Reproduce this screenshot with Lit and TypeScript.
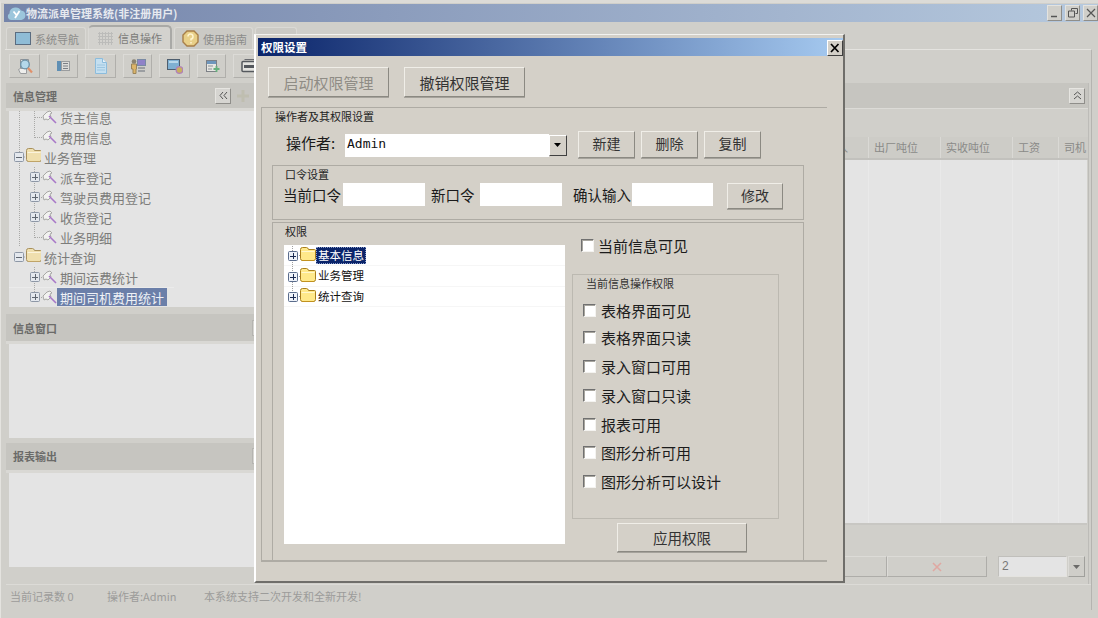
import { LitElement, html, css, svg } from "lit";
import { customElement } from "lit/decorators.js";

const plusBox = (x: number, y: number, minus: boolean, dim: boolean) => svg`
  <rect x=${x + 0.5} y=${y + 0.5} width="9" height="9" rx="1" fill=${dim ? "#e4e8ee" : "#eef2f8"} stroke=${dim ? "#8d97a6" : "#5a6c8c"}/>
  <path d="M${x + 2} ${y + 5}h6${minus ? "" : `M${x + 5} ${y + 2}v6`}" stroke=${dim ? "#5f6670" : "#1a2a50"} stroke-width="1" shape-rendering="crispEdges"/>`;

const folder = (x: number, y: number, dim: boolean) => svg`
  <path d="M${x + 0.5} ${y + 11.5}V${y + 2.5}q0-2 2-2h4q1.5 0 2 2h6q1 0 1 1v8q0 2-2 2H${x + 2.5}q-2 0-2-2z" fill=${dim ? "#efdfae" : "#ffe98a"} stroke=${dim ? "#a8905c" : "#a97f1c"}/>
  <path d="M${x + 1.5} ${y + 4.5}h13" stroke=${dim ? "#faf3dc" : "#fff8cf"}/>
  <path d="M${x + 2} ${y + 13.5}h12" stroke=${dim ? "#bfa468" : "#c2921f"}/>`;

const tool = (x: number, y: number) => svg`
  <path d="M${x + 1} ${y + 6}l4-4 3-1 2 2-2 1 1 3-3 3-2-1-2 1z" fill="#f2f2f0" stroke="#a8a8a6"/>
  <path d="M${x + 7} ${y + 6}l7 7" stroke="#a878c8" stroke-width="1.6"/>`;

type Kind = "folder" | "branch" | "leaf";
interface TreeRow { text: string; kind: Kind; last?: boolean; sel?: boolean; }

const LEFT_TREE: TreeRow[] = [
  { text: "货主信息", kind: "leaf" },
  { text: "费用信息", kind: "leaf", last: true },
  { text: "业务管理", kind: "folder" },
  { text: "派车登记", kind: "branch" },
  { text: "驾驶员费用登记", kind: "branch" },
  { text: "收货登记", kind: "branch" },
  { text: "业务明细", kind: "leaf", last: true },
  { text: "统计查询", kind: "folder" },
  { text: "期间运费统计", kind: "branch" },
  { text: "期间司机费用统计", kind: "branch", sel: true, last: true },
];

const dots = "#a9a9a7";
function leftGlyph(r: TreeRow, i: number) {
  const w = r.kind === "folder" ? 32 : 48;
  const rootLine = i < 7;
  const top = i === 0 ? 4 : 0;
  return html`<svg class="glyph" width=${w} height="20" viewBox="8 0 ${w} 20">
    ${rootLine ? svg`<path d="M18.5 ${top}V20" stroke=${dots} stroke-dasharray="1 1"/>` : ""}
    ${r.kind === "folder"
      ? svg`<path d="M23 10h2" stroke=${dots} stroke-dasharray="1 1"/>${plusBox(13, 5, true, true)}${folder(25, 1, true)}`
      : svg`<path d="M33.5 ${top}V${r.last ? 11 : 20}M34 10.5h7" stroke=${dots} stroke-dasharray="1 1"/>
            ${r.kind === "branch" ? plusBox(29, 5, false, true) : ""}${tool(41, 3)}`}
  </svg>`;
}

const dialogGlyph = (i: number) => html`<svg class="glyph" width="32" height="20" viewBox="284 0 32 20">
  <path d="M292.5 ${i === 0 ? -3 : 0}V${i === 2 ? 10 : 20}M293 10.5h7" stroke="#a0a0a0" stroke-dasharray="1 1"/>
  ${plusBox(288, 6, false, false)}${folder(300, 2, false)}
</svg>`;

const TOOL_ICONS = [
  svg`<path d="M3.500 1.500h8v9h-8z" fill="#e6e6e4" stroke="#8f9296"/><path d="M1.500 11.500l2-1h6v5h-6z" fill="#eeeeec" stroke="#9a9c9e"/><circle cx="8" cy="6.500" r="4.300" fill="#b4d8ea" stroke="#6d93a8" stroke-width="1.300"/><path d="M11 10l4 4.500" stroke="#e0906a" stroke-width="2.200"/>`,
  svg`<rect x="2" y="3" width="4" height="10" fill="#5f8fb4"/><rect x="6.500" y="3.500" width="8" height="9" fill="#dcdcda" stroke="#9a9c9e"/><path d="M8 5.500h5M8 8h5M8 10.500h5" stroke="#7a7e84"/>`,
  svg`<path d="M2.500 .5h7l4 4v11h-11z" fill="#c4dff0" stroke="#8cbcdc"/><path d="M9.500 .5v4h4" fill="#e8f2f8" stroke="#8cbcdc"/><path d="M4 7h8M4 9.500h8M4 12h8" stroke="#9cc6e0"/>`,
  svg`<circle cx="4" cy="3.500" r="2.300" fill="#8a8270"/><path d="M1.500 6h5v5H6v4.500H3V11h-1.500z" fill="#dcb468" stroke="#9a8458"/><rect x="7.500" y="1.500" width="8" height="6" fill="#8f82c8" stroke="#7a8aa4"/><path d="M8 10h7M8 13h7" stroke="#8a8e94" stroke-width="1.500"/>`,
  svg`<rect x=".5" y="1.500" width="12" height="10" fill="#7fb0d2" stroke="#4e5e6e"/><path d="M2 3h9v2H2z" fill="#b8d8ea"/><circle cx="12.500" cy="12" r="3.300" fill="#c8b060" stroke="#b080b8" stroke-width="1.300"/>`,
  svg`<rect x="2.500" y="2.500" width="10" height="11" fill="#e6e6e2" stroke="#7c8086"/><rect x="3" y="3" width="9" height="3" fill="#6e96bc"/><path d="M4 8h5M4 11h4" stroke="#8a8f95"/><path d="M12.500 8v6M9.500 11h6" stroke="#66b07c" stroke-width="1.800"/>`,
  svg`<path d="M3.500 1.500h10v3" fill="none" stroke="#6a6c70"/><rect x="1" y="3.500" width="14" height="10" rx="1" fill="#e4e4e0" stroke="#55595e" stroke-width="1.500"/><rect x="3" y="7" width="10" height="3" fill="#55595e"/>`,
];
const TOOL_WIDTHS = [31, 31, 31, 29, 31, 29, 31];

const CHECKS: [string, number][] = [
  ["表格界面可见", 12], ["表格界面只读", 11], ["录入窗口可用", 13], ["录入窗口只读", 13],
  ["报表可用", 13], ["图形分析可用", 12], ["图形分析可以设计", 13],
];

const COLS: [string, number][] = [["运费收入", 72], ["出厂吨位", 72], ["实收吨位", 72], ["工资", 46], ["司机", 30]];

@customElement("app-root")
export class AppRoot extends LitElement {
  static styles = css`
    :host { display: block; position: relative; width: 1098px; height: 618px; overflow: hidden;
      background: #d0cfca; font-family: "Noto Sans CJK SC", "Liberation Sans", sans-serif; color: #222;
      box-sizing: border-box; border-top: 3px solid #dcdbd7; border-left: 1px solid #e4e3df; }
    * { box-sizing: border-box; }
    svg { display: block; flex: none; }

    .title { height: 18px; margin: 1px 0 0 3px; display: flex; align-items: center; padding-left: 3px;
      background: linear-gradient(90deg, #7484aa, #b6c9de); color: #e6e9ef; font-size: 11px; font-weight: 700; line-height: 18px; }
    .title .logo { margin-right: 0; }
    .title .name { flex: 1; white-space: nowrap; }
    .wbtns { display: flex; gap: 3px; }
    .wbtn { width: 15px; height: 16px; background: #d0cfca; border: 1px solid; border-color: #e4e3df #8f8e8a #8f8e8a #e4e3df; display: flex; align-items: center; justify-content: center; }

    .tabs { height: 27px; margin-left: 5px; display: flex; align-items: flex-end; gap: 2px; }
    .tab { height: 22px; display: flex; align-items: center; gap: 4px; padding-left: 8px; font-size: 11px; color: #8c8c8a;
      background: #cbcac5; border: 1px solid #dad9d5; border-bottom: 0; border-radius: 3px 3px 0 0; }
    .tab.on { height: 24px; padding-left: 9px; gap: 4px; background: #d3d2ce; border-top: 2px solid #a9a9a6; border-right: 2px solid #a9a9a6; border-radius: 5px 5px 0 0; color: #7b7b79; }
    .tab.third { padding-left: 7px; }

    .page { margin-left: 4px; width: 1087px; height: 561px; border-top: 1px solid #e4e3df; border-right: 1px solid #b5b4b0; }
    .toolbar { height: 33px; padding: 4px 0 0 4px; display: flex; gap: 7px; }
    .tbtn { height: 24px; display: flex; align-items: center; justify-content: center; background: #cfcec9;
      border: 1px solid; border-color: #dcdbd7 #b0afab #b0afab #dcdbd7; }
    .body { display: flex; height: 501px; }

    .left { width: 249px; margin-left: 1px; flex: none; }
    .phead { display: flex; align-items: center; background: #c6c5c0; color: #6b6b69; font-size: 11px; font-weight: 700; padding-left: 7px;
      border-bottom: 3px solid #d9d8d4; }
    .phead .t { flex: 1; }
    .ph1 { height: 28px; }
    .ph2 { height: 30px; margin-top: 7px; }
    .ph3 { height: 30px; margin-top: 5px; padding-bottom: 2px; }
    .mini { width: 16px; height: 16px; display: flex; align-items: center; justify-content: center; background: #d6d5d1;
      border: 1px solid; border-color: #e6e5e1 #8f8e8a #8f8e8a #e6e5e1; }
    .plus { width: 16px; display: flex; justify-content: center; margin: 0 4px 0 4px; }
    .stub { width: 3px; height: 16px; background: #d6d5d1; border: 1px solid #b5b4b0; border-right: 0; }
    .pbody { margin-left: 3px; background: #e4e4e4; }
    .tree { height: 196px; display: flow-root; }
    .scroll { margin-top: -4px; }
    .b2 { height: 94px; }
    .b3 { height: 94px; }
    .row { height: 20px; display: flex; align-items: center; font-size: 13px; color: #7c7c7a; white-space: nowrap; }
    .row .tx { padding: 0 3px; line-height: 19px; height: 18px; }
    .row.sel { box-shadow: inset 0 1px #ebebeb; width: 165px; }
    .row.sel .tx { background: #6b7fa9; color: #eef1f6; }

    .right { flex: 1; display: flex; flex-direction: column; border-right: 1px solid #bdbcb8; width: 835px; margin-right: 2px; }
    .rhead { height: 25px; flex: none; background: #c6c5c0; display: flex; justify-content: flex-end; align-items: center; padding-right: 3px; }
    .rlight { height: 1px; background: #dcdbd7; flex: none; }
    .thead { margin-top: 28px; height: 23px; flex: none; display: flex; justify-content: flex-end; font-size: 11px; color: #8a8a88;
      background: #cdccc7; border-bottom: 2px solid #c2c1bd; }
    .th { line-height: 21px; padding-left: 5px; border-left: 1px solid #dad9d5; overflow: hidden; white-space: nowrap; }
    .th:first-child { padding-left: 7px; }
    .tbody { flex: none; height: 365px; background: #e4e4e4; border-bottom: 2px solid #c8c7c3; margin-right: 1px; display: flex; justify-content: flex-end; }
    .tbody i { display: block; border-left: 1px solid #e9e9e9; }
    .nav { margin-top: 31px; display: flex; align-items: flex-start; justify-content: flex-end; padding-right: 3px; }
    .navb { width: 100px; height: 21px; display: flex; align-items: center; justify-content: center; background: #d0cfca;
      border: 1px solid; border-color: #dcdbd7 #aeada9 #aeada9 #dcdbd7; }
    .ncombo { width: 69px; height: 21px; margin-left: 11px; background: #e4e4e4; border: 1px solid; border-color: #c0bfbb #e4e3df #e4e3df #c0bfbb;
      font-size: 12px; color: #777; padding-left: 3px; line-height: 19px; font-family: "Liberation Sans", sans-serif; }
    .ndrop { width: 17px; height: 21px; margin-left: 1px; background: #cfcec9; border: 1px solid; border-color: #dcdbd7 #a0a09c #a0a09c #dcdbd7; display: flex; align-items: center; justify-content: center; }

    .status { height: 23px; margin-left: 1px; border-top: 1px solid #dcdbd7; display: flex; align-items: center; padding-left: 4px;
      font-size: 11px; color: #9c9c9a; white-space: nowrap; }
    .status span:nth-child(1), .status span:nth-child(2) { width: 97px; }

    /* floating dialog window */
    .dlg { position: absolute; left: 253px; top: 31px; width: 591px; height: 549px; background: #d4d0c8; border-left: 2px solid #fff; border-top: 1px solid #f2f2f0;
      border-right: 2px solid #6f6e6a; border-bottom: 2px solid #6f6e6a; padding: 3px 0 0 2px; color: #1a1a1a; }
    .dt { height: 18px; display: flex; align-items: center; justify-content: space-between; padding-left: 3px;
      background: linear-gradient(90deg, #0a246a, #a6caf0); color: #fff; font-size: 11.500px; font-weight: 700; }
    .dx { width: 16px; height: 16px; margin-top: 1px; background: #d4d0c8; border: 1px solid; border-color: #fff #404040 #404040 #fff; display: flex; align-items: center; justify-content: center; }
    .btn { display: flex; align-items: center; justify-content: center; background: #d4d0c8; flex: none;
      border: 1px solid; border-color: #f0eee8 #8b8982 #8b8982 #f0eee8; box-shadow: 0 1px #a5a29b; color: #333; white-space: nowrap; }
    .top { display: flex; gap: 15px; padding: 11px 0 0 10px; }
    .big { width: 121px; height: 30px; font-size: 15px; }
    .dis { color: #8f8c85; }
    .main { margin: 10px 0 0 3px; width: 566px; height: 455px; border: solid #aeaba4; border-width: 1px 0 2px 1px; display: flex; flex-direction: column; }
    .lab { font-size: 11px; line-height: 14px; height: 14px; color: #222; flex: none; white-space: nowrap; }
    .main > .lab { margin: 1px 0 0 13px; }
    .oprow { display: flex; align-items: center; margin-top: 7px; height: 28px; padding-left: 24px; flex: none; }
    .oplab { width: 59px; font-size: 15px; white-space: nowrap; padding-bottom: 3px; }
    .combo { display: flex; margin-top: 2px; margin-right: 11px; flex: none; align-items: center; }
    .cinput { width: 204px; height: 23px; background: #fff; font: 13px/20px "DejaVu Sans Mono", "Liberation Mono", monospace; padding-left: 2px; color: #111; }
    .cdrop { width: 18px; height: 21px; background: #d4d0c8; border: 1px solid; border-color: #fff #404040 #404040 #fff; display: flex; align-items: center; justify-content: center; }
    .sm { width: 57px; height: 27px; font-size: 14px; margin-right: 6px; padding-bottom: 2px; }
    .gp { margin-left: 10px; width: 532px; border: 1px solid #aeaba4; flex: none; }
    .pw { margin-top: 7px; height: 55px; }
    .pw > .lab { margin: 1px 0 0 12px; }
    .pwrow { display: flex; align-items: center; height: 25px; margin-top: 1px; padding-left: 10px; font-size: 14.500px; white-space: nowrap; }
    .pwrow .in { height: 23px; background: #fff; flex: none; }
    .pwrow .tl { flex: none; }
    .w82 { width: 82px; }
    .w81 { width: 81px; }
    .t60 { width: 60px; }
    .t49 { width: 49px; margin-left: 6px; }
    .t59 { width: 59px; margin-left: 11px; }
    .mod { width: 56px; height: 26px; font-size: 14px; margin: 2px 0 0 14px; padding-bottom: 2px; }
    .perm { margin-top: 2px; height: 340px; border-bottom: 0; }
    .perm > .lab { margin: 1px 0 0 12px; }
    .pbodyrow { display: flex; }
    .dtree { margin: 7px 0 0 11px; width: 281px; height: 299px; background: #fff; flex: none; }
    .drow { height: 20px; display: flex; align-items: center; font-size: 11.500px; color: #111; box-shadow: 0 1px #f6f6f6; }
    .drow + .drow { margin-top: 0.500px; }
    .drow .tx { padding: 0 2px; height: 17px; line-height: 17px; white-space: nowrap; }
    .drow.sel .tx { background: #0a246a; color: #fff; outline: 1px dotted #8a9cc8; outline-offset: -1px; }
    .rc { margin-left: 7px; margin-top: -1px; width: 207px; flex: none; }
    .chk { display: flex; align-items: center; height: 16px; font-size: 15px; white-space: nowrap; color: #1c1c1c; }
    .box { width: 13px; height: 13px; flex: none; background: #fff; border: 1px solid; border-color: #707070 #f4f3f0 #f4f3f0 #707070; box-shadow: inset 1px 1px #a8a69f; }
    .chk.cur { margin-left: 9px; margin-bottom: 21px; }
    .chk.cur .box { margin-right: 4px; }
    .opbox { width: 207px; height: 245px; border: 1px solid #bcb9b1; }
    .opbox > .lab { margin: 1px 0 0 13px; color: #333; }
    .opbox .chk { margin-left: 10px; }
    .opbox .chk .box { margin-right: 5px; }
    .apply { width: 130px; height: 29px; margin: 4px 0 0 45px; font-size: 14.500px; padding-bottom: 1px; }
  `;

  private leftTree() {
    return LEFT_TREE.map((r, i) => html`<div class="row ${r.sel ? "sel" : ""}">${leftGlyph(r, i)}<span class="tx">${r.text}</span></div>`);
  }

  render() {
    const caret = (c: string) => html`<svg width="8" height="4" viewBox="0 0 8 4"><path d="M0 0h7L3.500 4z" fill=${c}/></svg>`;
    return html`
      <div class="title">
        <svg class="logo" width="19" height="15" viewBox="0 0 19 15"><path d="M4 14a3.500 3.500 0 0 1-1.500-6.500A5.500 5.500 0 0 1 8 1.500a6 6 0 0 1 6 3 4.800 4.800 0 0 1 .5 9.500z" fill="#9cc6dc"/><path d="M6.500 5.500l3 3.500M12.500 5L8 12" stroke="#fff" stroke-width="1.800"/></svg>
        <span class="name">物流派单管理系统(非注册用户)</span>
        <div class="wbtns">
          <div class="wbtn"><svg width="9" height="9" viewBox="0 0 9 9"><path d="M1 7.500h6" stroke="#555" stroke-width="1.500"/></svg></div>
          <div class="wbtn"><svg width="10" height="10" viewBox="0 0 10 10"><path d="M3.500 2.500V.5h6v5h-2M.5 3h6v6h-6z" fill="none" stroke="#555"/></svg></div>
          <div class="wbtn"><svg width="10" height="10" viewBox="0 0 10 10"><path d="M1 1l8 8M9 1l-8 8" stroke="#555" stroke-width="1.200"/></svg></div>
        </div>
      </div>
      <div class="tabs">
        <div class="tab" style="width:80px">
          <svg width="16" height="13" viewBox="0 0 16 13"><rect x=".5" y=".5" width="15" height="12" fill="#8fbcd6" stroke="#5a6c80"/></svg>系统导航</div>
        <div class="tab on" style="width:84px">
          <svg width="16" height="13" viewBox="0 0 16 13"><path d="M0 1.500h15M0 4.500h15M0 7.500h15M0 10.500h15M1.500 0v13M4.500 0v13M7.500 0v13M10.500 0v13M13.500 0v13" stroke="#bcbcba"/></svg>信息操作</div>
        <div class="tab third" style="width:79px">
          <svg width="17" height="17" viewBox="0 0 17 17"><path d="M5 1h7l4 4v7l-4 4H5l-4-4V5z" fill="#e8cf88" stroke="#a87f48" stroke-width="1.400"/><path d="M6 6.500a2.500 2.500 0 1 1 3 2.500v1.500M9 12v1.500" fill="none" stroke="#fff4d0" stroke-width="1.500"/></svg>使用指南</div>
        <div class="tab" style="width:42px"></div>
      </div>
      <div class="page">
        <div class="toolbar">
          ${TOOL_ICONS.map((ic, i) => html`<div class="tbtn" style="width:${TOOL_WIDTHS[i]}px"><svg width="16" height="16" viewBox="0 0 16 16">${ic}</svg></div>`)}
        </div>
        <div class="body">
          <div class="left">
            <div class="phead ph1"><span class="t">信息管理</span>
              <div class="mini"><svg width="9" height="9" viewBox="0 0 9 9"><path d="M4 1L1 4.500 4 8M8 1L5 4.500 8 8" fill="none" stroke="#555"/></svg></div>
              <div class="plus"><svg width="12" height="12" viewBox="0 0 12 12"><path d="M6 0v12M0 6h12" stroke="#bfbeb0" stroke-width="3"/></svg></div>
            </div>
            <div class="pbody tree"><div class="scroll">${this.leftTree()}</div></div>
            <div class="phead ph2"><span class="t">信息窗口</span><div class="stub"></div></div>
            <div class="pbody b2"></div>
            <div class="phead ph3"><span class="t">报表输出</span><div class="stub"></div></div>
            <div class="pbody b3"></div>
          </div>
          <div class="right">
            <div class="rhead"><div class="mini"><svg width="9" height="9" viewBox="0 0 9 9"><path d="M1 4l3.500-3L8 4M1 8l3.500-3L8 8" fill="none" stroke="#555"/></svg></div></div>
            <div class="rlight"></div>
            <div class="thead">
              ${COLS.map(([t, w]) => html`<div class="th" style="width:${w}px">${t}</div>`)}
            </div>
            <div class="tbody">
              ${[72, 72, 46, 29].map((w) => html`<i style="width:${w}px"></i>`)}
            </div>
            <div class="nav">
              <div class="navb"></div>
              <div class="navb"><svg width="10" height="10" viewBox="0 0 10 10"><path d="M1 1l8 8M9 1l-8 8" stroke="#dfa8a2" stroke-width="1.600"/></svg></div>
              <div class="ncombo">2</div>
              <div class="ndrop">${caret("#6b6b69")}</div>
            </div>
          </div>
        </div>
        <div class="status"><span>当前记录数 0</span><span>操作者:Admin</span><span>本系统支持二次开发和全新开发!</span></div>
      </div>

      <div class="dlg">
        <div class="dt"><span>权限设置</span>
          <div class="dx"><svg width="10" height="10" viewBox="0 0 10 10"><path d="M1 1l7.500 8M8.500 1L1 9" stroke="#000" stroke-width="1.700"/></svg></div>
        </div>
        <div class="top">
          <div class="btn big dis">启动权限管理</div>
          <div class="btn big">撤销权限管理</div>
        </div>
        <div class="main">
          <div class="lab">操作者及其权限设置</div>
          <div class="oprow">
            <div class="oplab">操作者:</div>
            <div class="combo"><div class="cinput">Admin</div><div class="cdrop">${caret("#000")}</div></div>
            <div class="btn sm">新建</div><div class="btn sm">删除</div><div class="btn sm">复制</div>
          </div>
          <div class="gp pw">
            <div class="lab">口令设置</div>
            <div class="pwrow">
              <span class="tl t60">当前口令</span><div class="in w82"></div>
              <span class="tl t49">新口令</span><div class="in w82"></div>
              <span class="tl t59">确认输入</span><div class="in w81"></div>
              <div class="btn mod">修改</div>
            </div>
          </div>
          <div class="gp perm">
            <div class="lab">权限</div>
            <div class="pbodyrow">
              <div class="dtree">
                ${["基本信息", "业务管理", "统计查询"].map((t, i) => html`<div class="drow ${i === 0 ? "sel" : ""}">${dialogGlyph(i)}<span class="tx">${t}</span></div>`)}
              </div>
              <div class="rc">
                <div class="chk cur"><span class="box"></span>当前信息可见</div>
                <div class="opbox">
                  <div class="lab">当前信息操作权限</div>
                  ${CHECKS.map(([t, m]) => html`<div class="chk" style="margin-top:${m}px"><span class="box"></span>${t}</div>`)}
                </div>
                <div class="btn apply">应用权限</div>
              </div>
            </div>
          </div>
        </div>
      </div>
    `;
  }
}
